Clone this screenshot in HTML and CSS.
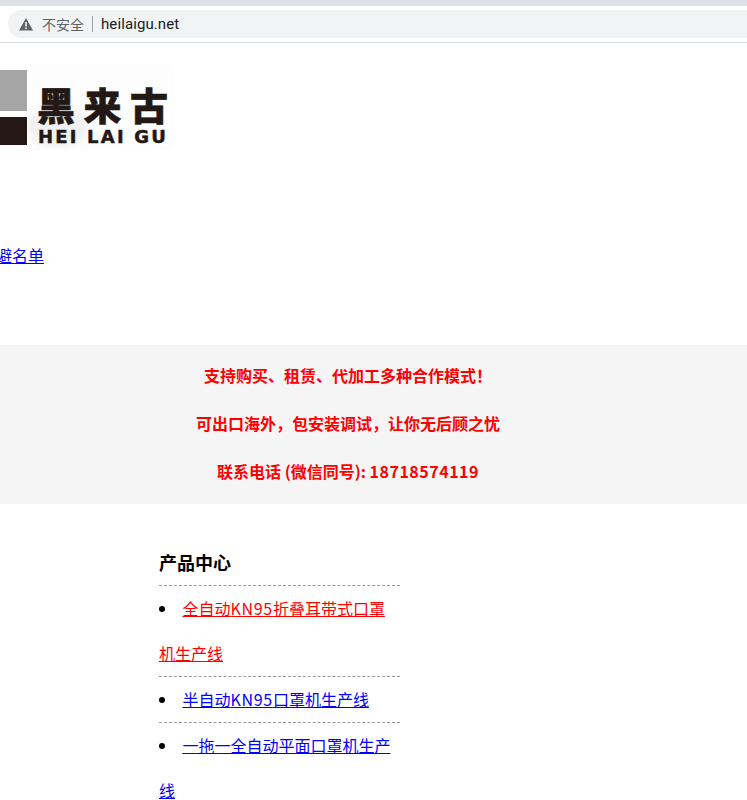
FILE: index.html
```html
<!DOCTYPE html>
<html lang="zh-CN">
<head>
<meta charset="utf-8">
<title>heilaigu.net</title>
<link rel="stylesheet" href="styles.css">
</head>
<body>
<header class="chrome">
  <div class="tabstrip"></div>
  <div class="toolbar">
    <div class="omnibox">
      <svg class="warn" width="14" height="13" viewBox="0 0 14 13"><path d="M7 0 L14 12.5 H0 Z" fill="#5f6368"/><rect x="6.2" y="4" width="1.6" height="4.5" fill="#f1f3f4"/><rect x="6.2" y="9.5" width="1.6" height="1.6" fill="#f1f3f4"/></svg>
      <span class="insecure">不安全</span>
      <span class="sep"></span>
      <span class="url">heilaigu.net</span>
    </div>
  </div>
</header>
<main class="page">
  <div class="logo">
    <div class="mark"><span class="mark-top"></span><span class="mark-bottom"></span></div>
    <div class="brand">
      <div class="brand-cn"><span>黑</span><span>来</span><span>古</span></div>
      <div class="brand-en">HEI LAI GU</div>
    </div>
  </div>
  <div class="blacklist"><a href="#">避名单</a></div>
  <section class="notice">
    <p>支持购买、租赁、代加工多种合作模式！</p>
    <p>可出口海外，包安装调试，让你无后顾之忧</p>
    <p>联系电话 (微信同号): <span class="digits">18718574119</span></p>
  </section>
  <section class="products">
    <h2>产品中心</h2>
    <ul>
      <li><a class="active" href="#">全自动<span class="latin">KN95</span>折叠耳带式口罩机生产线</a></li>
      <li><a href="#">半自动<span class="latin">KN95</span>口罩机生产线</a></li>
      <li><a href="#">一拖一全自动平面口罩机生产线</a></li>
    </ul>
  </section>
</main>
</body>
</html>
```
FILE: styles.css
```css
* { box-sizing: border-box; }
html, body { margin: 0; padding: 0; height: 800px; overflow: hidden; background: #fff; }
body { font-family: "Noto Sans CJK SC", sans-serif; font-size: 16px; color: #000; }
.chrome { height: 43px; border-bottom: 1px solid #dadce0; background: #fff; }
.tabstrip { height: 6px; background: #dee1e6; }
.toolbar { padding: 4px 0 0 8px; }
.omnibox { height: 28px; background: #f1f3f4; border-radius: 14px 0 0 14px; display: flex; align-items: center; padding-left: 11px; }
.warn { display: block; }
.insecure { margin-left: 9px; font-size: 14px; color: #5f6368; line-height: 27px; }
.sep { width: 1px; height: 16px; background: #9aa0a6; margin: 0 8px; }
.url { font-family: "Roboto", sans-serif; font-size: 15px; letter-spacing: 0.1px; color: #202124; line-height: 28px; }
.page { overflow: hidden; }
.logo { width: 173px; height: 85px; margin-top: 22px; display: flex; background: radial-gradient(ellipse 36px 24px at 58px 62px, #f1f1f1 0 70%, rgba(241,241,241,0) 100%), #fdfdfd; }
.mark { width: 27px; padding-top: 5px; display: flex; flex-direction: column; }
.mark-top { display: block; height: 41px; background: #a5a5a5; }
.mark-bottom { display: block; height: 28px; margin-top: 6px; background: #231815; }
.brand { margin-left: 10px; padding-top: 19px; }
.brand-cn { width: 131px; display: flex; justify-content: space-between; font-size: 38px; line-height: 40px; font-weight: 900; color: #231815; height: 43px; -webkit-text-stroke: 0.6px #231815; }
.brand-en { font-family: "DejaVu Sans", sans-serif; font-weight: 700; font-size: 18px; line-height: 20px; letter-spacing: 2.2px; padding-left: 1px; color: #231815; white-space: nowrap; -webkit-text-stroke: 0.5px #231815; }
.blacklist { margin: 93px 0 0 -4px; height: 26px; line-height: 25px; }
.blacklist a { color: #00f; }
.notice { margin-top: 76px; height: 159px; background: #f5f5f5; padding-top: 6px; width: 100%; }
.notice p { margin: 0; width: 696px; height: 48px; line-height: 48px; text-align: center; font-weight: 700; color: #f00; }
.digits { letter-spacing: 0.5px; }
.products { width: 241px; margin: 44px 0 0 159px; }
.products h2 { margin: 0; font-size: 18px; font-weight: 700; line-height: 28px; height: 38px; padding-bottom: 10px; border-bottom: 1px dashed #999; }
.products ul { margin: 0; padding: 0; list-style: disc inside; }
.products li { line-height: 45px; border-bottom: 1px dashed #999; }
.products li:last-child { border-bottom: 0; }
.products a { color: #00f; margin-left: 0.4px; }
.products a.active { color: #f00; }
.latin { letter-spacing: 0.7px; }
```
